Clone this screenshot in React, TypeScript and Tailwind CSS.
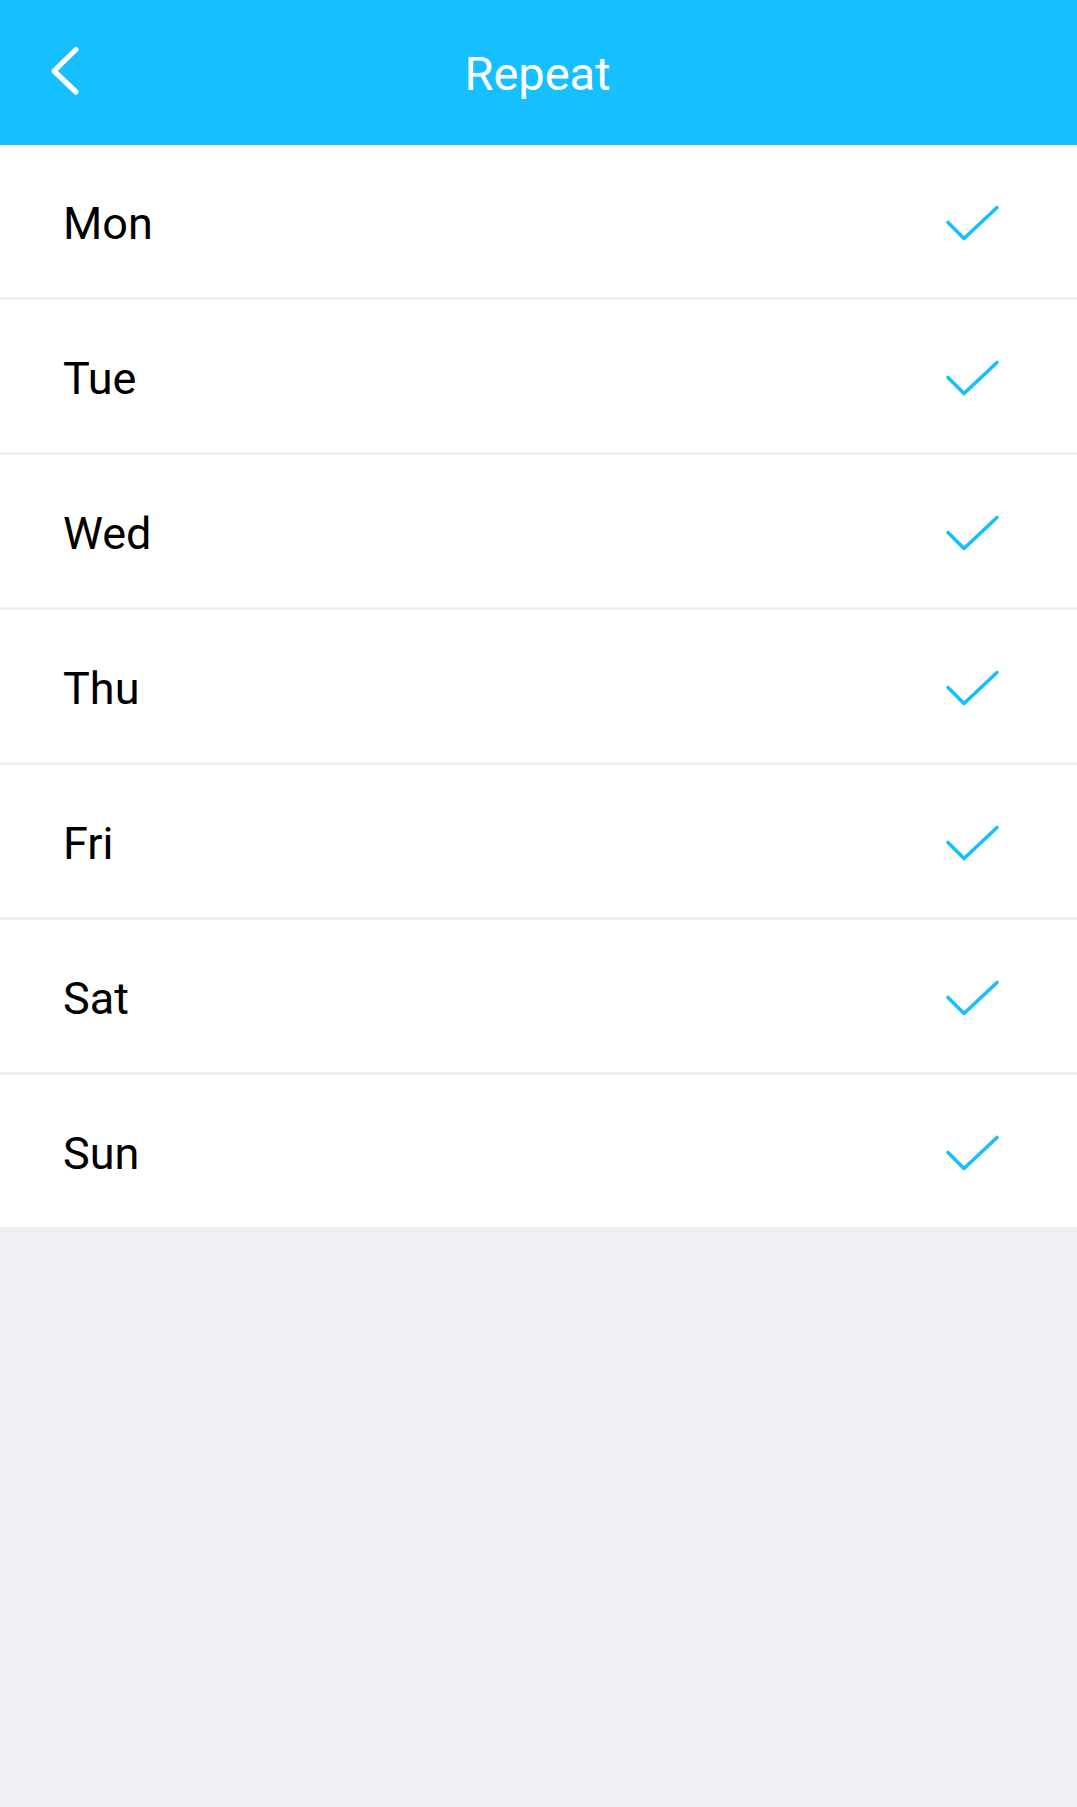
const days = ["Mon", "Tue", "Wed", "Thu", "Fri", "Sat", "Sun"];

function Check() {
  return (
    <svg className="translate-y-[3px]" width="56" height="40" viewBox="0 0 56 40" fill="none">
      <path d="M3 18.5L19 34.5L52 3.5" stroke="#16bfff" strokeWidth="3.6" strokeLinecap="round" strokeLinejoin="round" />
    </svg>
  );
}

export default function App() {
  return (
    <div className="min-h-[1807px] w-full bg-[#efeff4]" style={{ fontFamily: "Roboto, 'Noto Sans', sans-serif" }}>
      <header className="relative flex h-[145px] items-center justify-center bg-[#16bfff]">
        <button className="absolute left-[46px] top-[45px] flex h-[54px] w-[40px] items-center">
          <svg width="36" height="54" viewBox="0 0 36 54" fill="none">
            <path d="M30 4.5L8 26L30 47" stroke="#fff" strokeWidth="5.2" strokeLinecap="round" strokeLinejoin="round" />
          </svg>
        </button>
        <h1 className="pr-[2px] pt-[2px] text-[47px] leading-none text-white">Repeat</h1>
      </header>
      <ul className="bg-white">
        {days.map((d, i) => (
          <li
            key={d}
            className={
              "flex h-[152px] items-center justify-between pl-[63px] pr-[76px] " +
              (i < days.length - 1 ? "box-content border-b-[3px] border-[#efeff4]" : "")
            }
          >
            <span className="pt-[4px] text-[45px] leading-none text-black">{d}</span>
            <Check />
          </li>
        ))}
      </ul>
    </div>
  );
}
